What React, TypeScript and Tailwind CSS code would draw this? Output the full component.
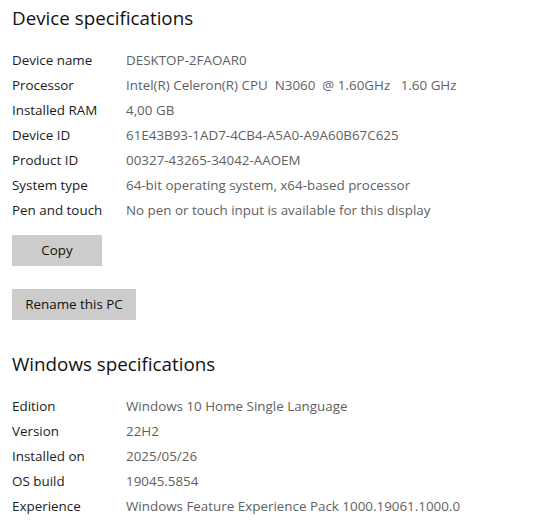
import React from "react";

const device: [string, string][] = [
  ["Device name", "DESKTOP-2FAOAR0"],
  ["Processor", "Intel(R) Celeron(R) CPU  N3060  @ 1.60GHz   1.60 GHz"],
  ["Installed RAM", "4,00 GB"],
  ["Device ID", "61E43B93-1AD7-4CB4-A5A0-A9A60B67C625"],
  ["Product ID", "00327-43265-34042-AAOEM"],
  ["System type", "64-bit operating system, x64-based processor"],
  ["Pen and touch", "No pen or touch input is available for this display"],
];

const windows: [string, string][] = [
  ["Edition", "Windows 10 Home Single Language"],
  ["Version", "22H2"],
  ["Installed on", "2025/05/26"],
  ["OS build", "19045.5854"],
  ["Experience", "Windows Feature Experience Pack 1000.19061.1000.0"],
];

function Rows({ rows }: { rows: [string, string][] }) {
  return (
    <div className="flex flex-col">
      {rows.map(([k, v]) => (
        <div key={k} className="flex h-[25px] items-center text-[13.4px]">
          <div className="w-[114px] shrink-0 text-[#1b1b1b]">{k}</div>
          <div className="whitespace-pre text-[#5f5f5f]">{v}</div>
        </div>
      ))}
    </div>
  );
}

export default function App() {
  return (
    <div
      className="w-[551px] h-[530px] overflow-hidden bg-white pl-3"
      style={{ fontFamily: '"Open Sans", "Noto Sans", sans-serif' }}
    >
      <h1 className="flex h-9 items-center text-[18.8px] text-[#111]">Device specifications</h1>
      <div className="mt-3">
        <Rows rows={device} />
      </div>
      <button className="mt-3 flex h-[31px] w-[90px] items-center justify-center bg-[#cccccc] text-[13.4px] text-[#111]">
        Copy
      </button>
      <button className="mt-[23px] flex h-[31px] w-[124px] items-center justify-center bg-[#cccccc] text-[13.4px] text-[#111]">
        Rename this PC
      </button>
      <h2 className="mt-[26px] flex h-9 items-center text-[18.8px] text-[#111]">Windows specifications</h2>
      <div className="mt-3">
        <Rows rows={windows} />
      </div>
    </div>
  );
}
